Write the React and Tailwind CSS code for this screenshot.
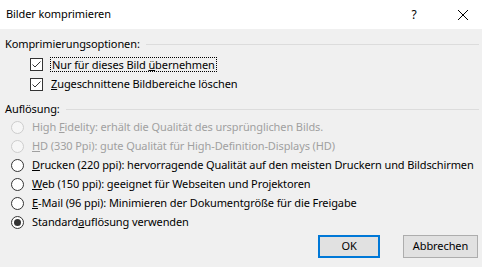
import React from 'react';

const Check = () => (
  <svg width="13" height="13" viewBox="0 0 13 13" className="shrink-0">
    <rect x="0.5" y="0.5" width="12" height="12" fill="#fff" stroke="#333" />
    <path d="M2.5 6.5 L5 9 L10.5 3.5" fill="none" stroke="#333" strokeWidth="1" />
  </svg>
);

const Radio = ({ checked, disabled }) => (
  <svg width="13" height="13" viewBox="0 0 13 13" className="shrink-0">
    <circle cx="6.5" cy="6.5" r="6" fill={disabled ? '#f6f6f6' : '#fff'} stroke={disabled ? '#cccccc' : '#333'} />
    {checked && <circle cx="6.5" cy="6.5" r="3.5" fill="#333" />}
  </svg>
);

const GroupHeader = ({ children, className }) => (
  <div className={`flex items-center h-[16px] ${className || ''}`}>
    <span className="pr-[6px]">{children}</span>
    <div className="flex-1 h-px bg-[#dcdcdc] mr-[3px]" />
  </div>
);

const RadioRow = ({ checked, disabled, children }) => (
  <div className={`flex items-center h-[19px] pl-[6px] gap-[8px] ${disabled ? 'text-[#a0a0a0]' : 'text-black'}`}>
    <Radio checked={checked} disabled={disabled} />
    <span className="whitespace-nowrap">{children}</span>
  </div>
);

export default function App() {
  return (
    <div className="w-[482px] h-[267px] bg-[#f0f0f0] text-[11px] tracking-[-0.1px] text-black font-['Noto_Sans',sans-serif] overflow-hidden">
      {/* Title bar */}
      <div className="h-[29px] bg-white flex items-center pl-[6px]">
        <span className="flex-1">Bilder komprimieren</span>
        <span className="w-[14px] text-center mr-[36px] text-[12px]">?</span>
        <svg width="12" height="12" viewBox="0 0 12 12" className="mr-[13px]">
          <path d="M1 1 L11 11 M11 1 L1 11" stroke="#000" strokeWidth="1" />
        </svg>
      </div>

      <div className="pl-[5px]">
        {/* Compression options */}
        <GroupHeader className="mt-[7px]">Komprimierungsoptionen:</GroupHeader>
        <div className="flex items-center h-[20px] mt-[2px] pl-[25px] gap-[7px]">
          <Check />
          <span className="border border-dotted border-black px-px leading-[13px]">
            Nur für dieses Bild <u>ü</u>bernehmen
          </span>
        </div>
        <div className="flex items-center h-[20px] pl-[25px] gap-[8px]">
          <Check />
          <span><u>Z</u>ugeschnittene Bildbereiche löschen</span>
        </div>

        {/* Resolution */}
        <GroupHeader className="mt-[7px]">Auflösung:</GroupHeader>
        <div className="mt-[1px]">
          <RadioRow disabled>High <u>F</u>idelity: erhält die Qualität des ursprünglichen Bilds.</RadioRow>
          <RadioRow disabled><u>H</u>D (330 Ppi): gute Qualität für High-Definition-Displays (HD)</RadioRow>
          <RadioRow><u>D</u>rucken (220 ppi): hervorragende Qualität auf den meisten Druckern und Bildschirmen</RadioRow>
          <RadioRow><u>W</u>eb (150 ppi): geeignet für Webseiten und Projektoren</RadioRow>
          <RadioRow><u>E</u>-Mail (96 ppi): Minimieren der Dokumentgröße für die Freigabe</RadioRow>
          <RadioRow checked>Standard<u>a</u>uflösung verwenden</RadioRow>
        </div>
      </div>

      {/* Buttons */}
      <div className="flex justify-end gap-[23px] pr-[4px] mt-[3px]">
        <button className="w-[62px] h-[23px] bg-[#e1e1e1] border-2 border-[#0078d7]">OK</button>
        <button className="w-[75px] h-[23px] bg-[#e1e1e1] border border-[#adadad]">Abbrechen</button>
      </div>
    </div>
  );
}
